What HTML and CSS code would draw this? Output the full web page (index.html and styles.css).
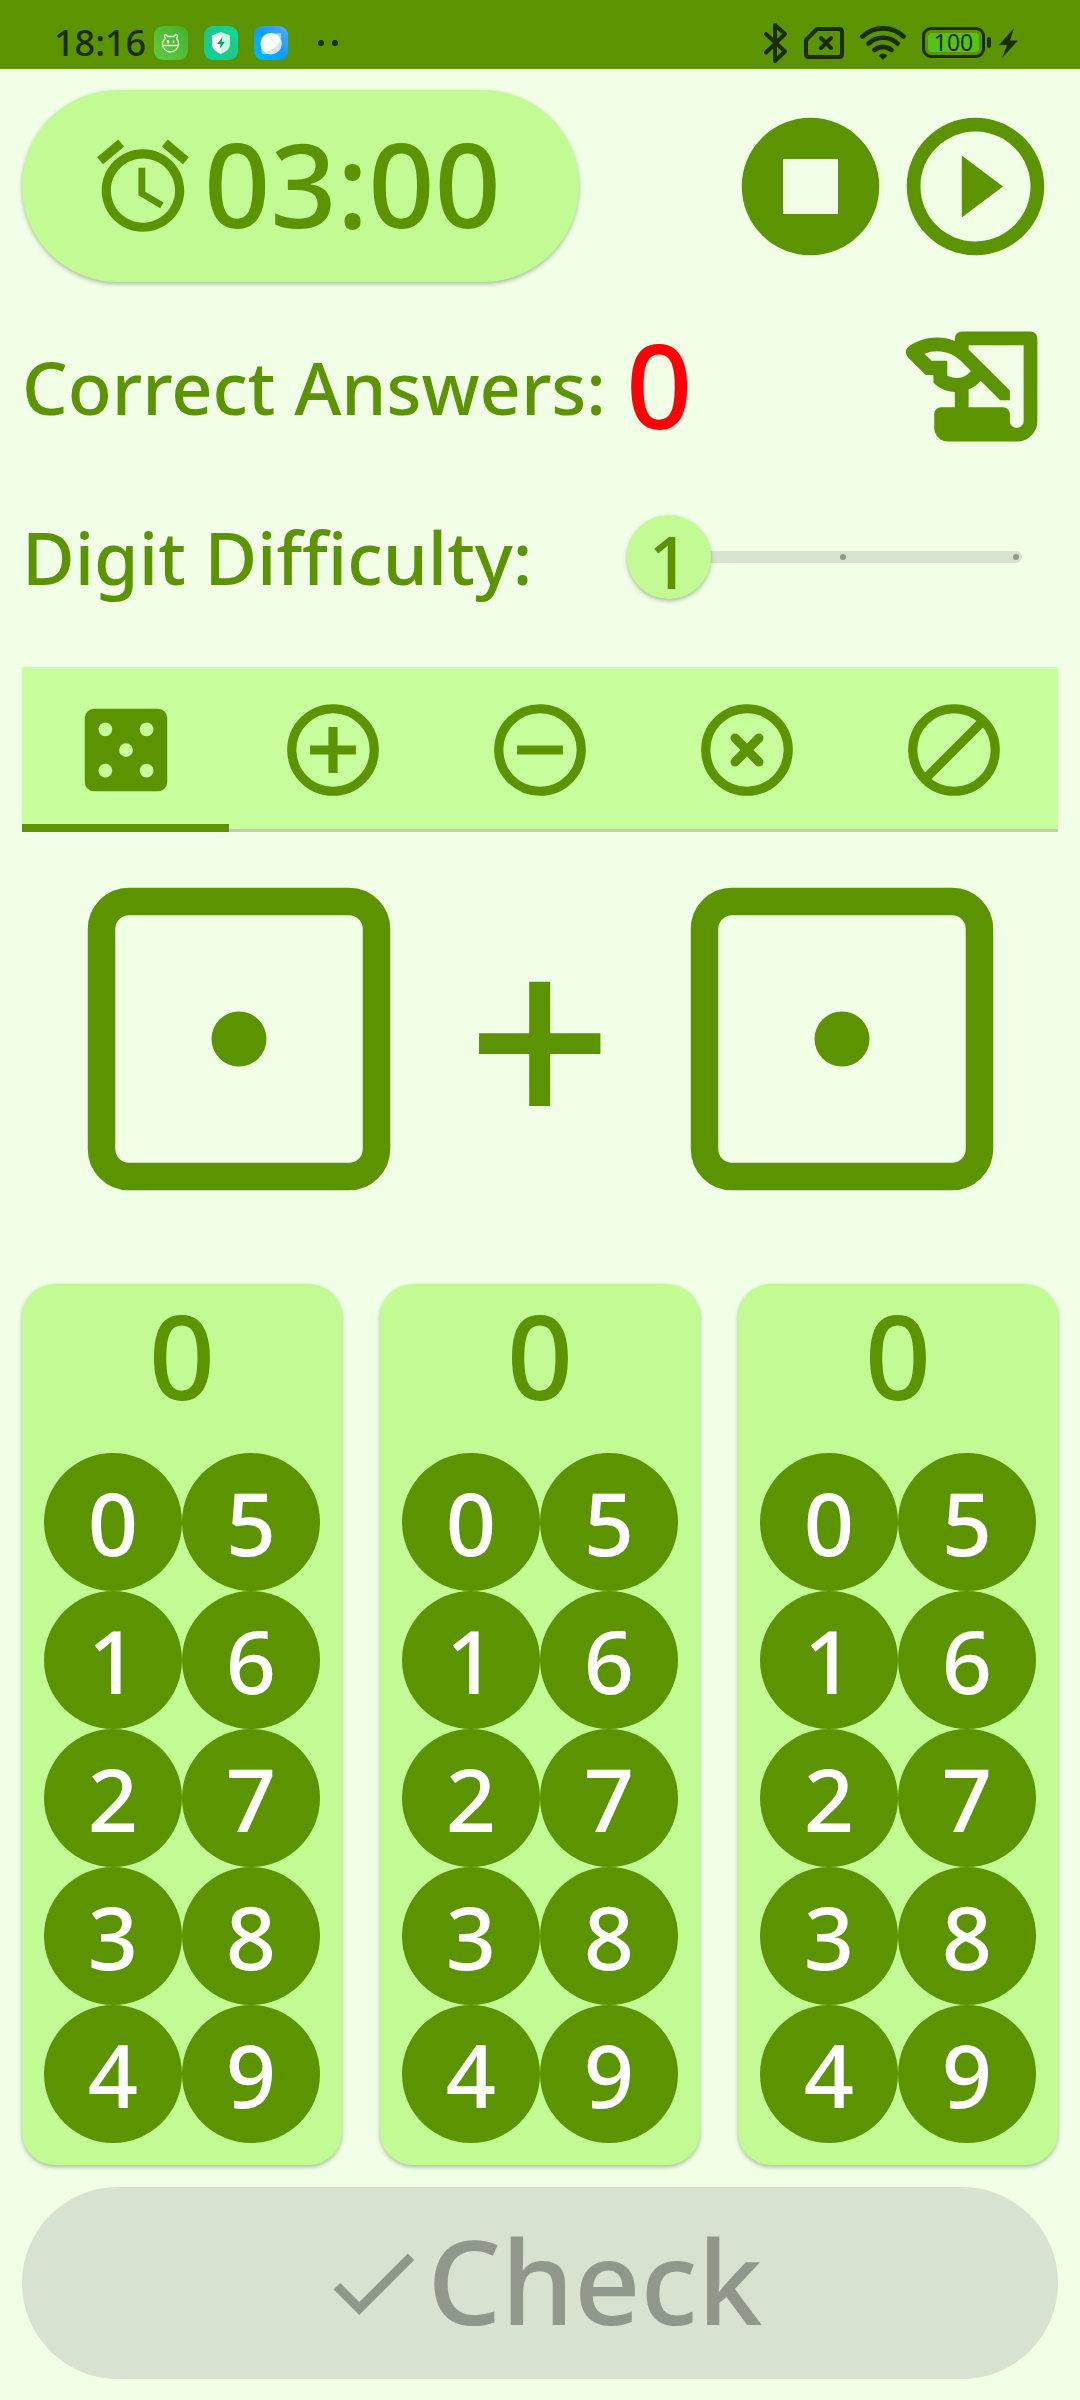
FILE: index.html
```html
<!DOCTYPE html>
<html lang="en">
<head>
<meta charset="utf-8">
<meta name="viewport" content="width=device-width, initial-scale=1">
<title>Math practice</title>
<link rel="stylesheet" href="styles.css">
</head>
<body>
<header class="status">
  <div class="status-left">
    <time class="clock">18:16</time>
    <span class="apps">
      <svg class="app" viewBox="0 0 34 34" aria-hidden="true">
        <defs>
          <linearGradient id="g1" x1="0" y1="1" x2="1" y2="0"><stop offset="0" stop-color="#63cb45"/><stop offset="1" stop-color="#43b02c"/></linearGradient>
          <linearGradient id="g2" x1="0" y1="1" x2="1" y2="0"><stop offset="0" stop-color="#0bd3a0"/><stop offset="0.5" stop-color="#1cc98a"/><stop offset="1" stop-color="#12d79d"/></linearGradient>
          <linearGradient id="g3" x1="0" y1="1" x2="1" y2="0"><stop offset="0" stop-color="#00bcff"/><stop offset="0.5" stop-color="#06a0ff"/><stop offset="1" stop-color="#5cabff"/></linearGradient>
        </defs>
        <rect width="34" height="34" rx="9" fill="url(#g1)"/>
        <path d="M11 13 10.500 9q2-1 3 1.500h6.500q1.500-2.500 3.500-1.500L23 13q1.500 2 1.500 5a8 8 0 0 1-16 0q0-3 2.500-5zM8.500 19.500h16" fill="none" stroke="#e9fbe0" stroke-width="1.300" stroke-linejoin="round"/>
        <path d="M14 14v3.500M12.600 15.700h2.800M19.500 14.500v2.500" stroke="#e9fbe0" stroke-width="1.500" fill="none"/>
      </svg>
      <svg class="app" viewBox="0 0 34 34" aria-hidden="true">
        <rect width="34" height="34" rx="9" fill="url(#g2)"/>
        <path d="M17 6 8 9.500V19q0 5 9 9z" fill="#fff"/>
        <path d="M17 6l9 3.500V19q0 5-9 9z" fill="#c3fbe4"/>
        <path d="M18.500 11l-5.500 7h3.500l-.800 5 5-7h-3z" fill="#159c6c"/>
      </svg>
      <svg class="app" viewBox="0 0 34 34" aria-hidden="true">
        <rect width="34" height="34" rx="9" fill="url(#g3)"/>
        <path d="M18 8l9-1v6zM7 21l1 7h7z" fill="#9bd5ff"/>
        <circle cx="17" cy="17.500" r="10.500" fill="#fff"/>
        <path d="M27.500 17a10.500 10.500 0 0 1-17 9Q21 24 27.500 14z" fill="#cfe7fc"/>
      </svg>
    </span>
    <svg class="more" viewBox="0 0 20 8" aria-hidden="true"><circle cx="3" cy="4" r="3"/><circle cx="17" cy="4" r="3"/></svg>
  </div>
  <div class="status-right">
    <svg width="24" height="40" viewBox="0 0 24 40" aria-label="Bluetooth"><path d="M2 11l19 17.500-10 9.500V2l10 9L2 29.500" fill="none" stroke="currentColor" stroke-width="4" stroke-linejoin="round" stroke-linecap="round"/></svg>
    <svg width="40" height="32" viewBox="0 0 40 32" aria-label="No SIM"><path d="M13 2h22q3 0 3 3v22q0 3-3 3H5q-3 0-3-3V13z" fill="none" stroke="currentColor" stroke-width="4" stroke-linejoin="round"/><path d="M17 11l10 10M27 11L17 21" stroke="currentColor" stroke-width="4" stroke-linecap="round"/></svg>
    <svg width="46" height="34" viewBox="0 0 46 34" aria-label="Wi-Fi"><path d="M2.500 10.500a30 30 0 0 1 41 0M8.500 17.500a21 21 0 0 1 29 0M14.500 24a13 13 0 0 1 17 0" fill="none" stroke="currentColor" stroke-width="4.600" stroke-linecap="round"/><path d="M18.500 29.500q4.500-4 9 0L23 34z" fill="currentColor"/></svg>
    <span class="battery-group">
      <span class="battery"><span class="charge">100</span></span>
      <span class="nub"></span>
      <svg width="20" height="30" viewBox="0 0 20 30" aria-label="Charging"><path d="M15 0L0 17h8L3 30 19 12.500h-8z" fill="currentColor"/></svg>
    </span>
  </div>
</header>

<main class="app-main">
  <section class="row timer-row">
    <div class="timer pill">
      <svg class="icon" viewBox="0 0 24 24" aria-hidden="true"><path d="M22 5.720l-4.600-3.860-1.290 1.530 4.600 3.860L22 5.720zM7.880 3.390L6.600 1.860 2 5.710l1.290 1.530 4.590-3.850zM12.500 8H11v6l4.750 2.850.75-1.230-4-2.370V8zM12 4c-4.970 0-9 4.030-9 9s4.020 9 9 9c4.970 0 9-4.030 9-9s-4.030-9-9-9zm0 16c-3.870 0-7-3.130-7-7s3.130-7 7-7 7 3.130 7 7-3.130 7-7 7z"/></svg>
      <span class="big">03:00</span>
    </div>
    <div class="controls">
      <button class="icon-btn" type="button" aria-label="Stop"><svg viewBox="0 0 24 24"><path d="M12 2a10 10 0 1 0 0 20 10 10 0 0 0 0-20zm4 14H8V8h8z"/></svg></button>
      <button class="icon-btn" type="button" aria-label="Start"><svg viewBox="0 0 24 24"><path d="M10 16.500l6-4.500-6-4.500v9zM12 2C6.480 2 2 6.480 2 12s4.480 10 10 10 10-4.480 10-10S17.520 2 12 2zm0 18c-4.410 0-8-3.590-8-8s3.590-8 8-8 8 3.590 8 8-3.590 8-8 8z"/></svg></button>
    </div>
  </section>

  <section class="row">
    <p class="score"><span class="label">Correct Answers:</span><span class="big score-value">0</span></p>
    <button class="icon-btn" type="button" aria-label="History"><svg viewBox="0 0 24 24"><path d="M10 4c-.55 0-1 .45-1 1v.380c-.83-.33-1.720-.5-2.610-.5-1.430 0-2.860.43-4.090 1.300-.53.37-.56 1.130-.1 1.590l2.570 2.570h1.110v1.110c.86.86 1.980 1.310 3.110 1.360V15H7c-.55 0-1 .45-1 1v2c0 1.100.9 2 2 2h10c1.660 0 3-1.340 3-3V5c0-.55-.45-1-1-1H10zM7.890 10.410V8.260H5.610L4.570 7.220a5.070 5.070 0 0 1 1.820-.34c1.340 0 2.590.52 3.540 1.460l1.410 1.410-.2.2a2.700 2.700 0 0 1-1.920.8c-.47 0-.93-.12-1.330-.34zM19 17c0 .55-.45 1-1 1s-1-.45-1-1v-1c0-.55-.45-1-1-1h-5v-2.590c.57-.23 1.100-.57 1.560-1.030l.2-.2L15.590 14H17v-1.410l-6-5.970V6h8v11z"/></svg></button>
  </section>

  <section class="row difficulty">
    <label class="label" for="difficulty">Digit Difficulty:</label>
    <div class="slider">
      <div class="track"><i class="tick"></i><i class="tick"></i><i class="tick"></i></div>
      <input id="difficulty" type="range" min="1" max="3" value="1">
      <output class="thumb-label" for="difficulty">1</output>
    </div>
  </section>

  <nav class="tabs" aria-label="Operation">
    <button class="tab active" type="button" aria-label="Random"><svg class="icon" viewBox="0 0 24 24"><path fill-rule="evenodd" d="M5 3h14a2 2 0 0 1 2 2v14a2 2 0 0 1-2 2H5a2 2 0 0 1-2-2V5a2 2 0 0 1 2-2zM6 7.500a1.500 1.500 0 1 0 3 0 1.500 1.500 0 0 0-3 0zM15 7.500a1.500 1.500 0 1 0 3 0 1.500 1.500 0 0 0-3 0zM10.500 12a1.500 1.500 0 1 0 3 0 1.500 1.500 0 0 0-3 0zM6 16.500a1.500 1.500 0 1 0 3 0 1.500 1.500 0 0 0-3 0zM15 16.500a1.500 1.500 0 1 0 3 0 1.500 1.500 0 0 0-3 0z"/></svg></button>
    <button class="tab" type="button" aria-label="Addition"><svg class="icon line" viewBox="0 0 24 24"><circle cx="12" cy="12" r="9"/><path d="M12 7v10M7 12h10"/></svg></button>
    <button class="tab" type="button" aria-label="Subtraction"><svg class="icon line" viewBox="0 0 24 24"><circle cx="12" cy="12" r="9"/><path d="M7 12h10"/></svg></button>
    <button class="tab" type="button" aria-label="Multiplication"><svg class="icon line" viewBox="0 0 24 24"><circle cx="12" cy="12" r="9"/><path stroke-linecap="round" d="M9.400 9.400l5.200 5.200M14.600 9.400l-5.200 5.200"/></svg></button>
    <button class="tab" type="button" aria-label="Division"><svg class="icon line" viewBox="0 0 24 24"><circle cx="12" cy="12" r="9"/><path d="M18 6L6 18"/></svg></button>
  </nav>

  <section class="problem" aria-label="Problem">
    <svg class="die" viewBox="0 0 24 24" role="img" aria-label="1"><rect x="2" y="2" width="20" height="20" rx="2" class="die-frame"/><circle cx="12" cy="12" r="2"/></svg>
    <span class="operator">+</span>
    <svg class="die" viewBox="0 0 24 24" role="img" aria-label="1"><rect x="2" y="2" width="20" height="20" rx="2" class="die-frame"/><circle cx="12" cy="12" r="2"/></svg>
  </section>

  <section class="pads" aria-label="Answer">
    <div class="pad">
      <output class="big pad-value">0</output>
      <div class="keys">
        <button type="button">0</button><button type="button">1</button><button type="button">2</button><button type="button">3</button><button type="button">4</button>
        <button type="button">5</button><button type="button">6</button><button type="button">7</button><button type="button">8</button><button type="button">9</button>
      </div>
    </div>
    <div class="pad">
      <output class="big pad-value">0</output>
      <div class="keys">
        <button type="button">0</button><button type="button">1</button><button type="button">2</button><button type="button">3</button><button type="button">4</button>
        <button type="button">5</button><button type="button">6</button><button type="button">7</button><button type="button">8</button><button type="button">9</button>
      </div>
    </div>
    <div class="pad">
      <output class="big pad-value">0</output>
      <div class="keys">
        <button type="button">0</button><button type="button">1</button><button type="button">2</button><button type="button">3</button><button type="button">4</button>
        <button type="button">5</button><button type="button">6</button><button type="button">7</button><button type="button">8</button><button type="button">9</button>
      </div>
    </div>
  </section>

  <button class="check pill" type="button" disabled>
    <svg class="icon" viewBox="0 0 24 24" aria-hidden="true"><path d="M9 16.170L4.830 12l-1.420 1.410L9 19 21 7l-1.410-1.410z"/></svg>
    <span class="big">Check</span>
  </button>
</main>
</body>
</html>
```
FILE: styles.css
```css
:root {
  --page: #f0ffe6;
  --green: #5c9300;
  --card: #c2fb94;
  --tabs: #c7ff9c;
  --disabled: #d7e2d0;
  --disabled-ink: #90988c;
  --status-ink: #1a2c00;
  --shadow: 0 2px 4px rgba(40, 60, 20, 0.35);
}

* {
  box-sizing: border-box;
}

body {
  margin: 0;
  background: var(--page);
  color: var(--green);
  font-family: "Noto Sans", sans-serif;
  font-weight: 500;
}

button {
  margin: 0;
  padding: 0;
  border: 0;
  background: none;
  color: inherit;
  font: inherit;
}

svg {
  display: block;
  flex: none;
  fill: currentColor;
}

/* Status bar */
.status {
  display: flex;
  align-items: center;
  justify-content: space-between;
  height: 69px;
  padding: 16px 61px 0 54px;
  background: var(--green);
  color: var(--status-ink);
}

.status-left,
.status-right,
.apps,
.battery-group {
  display: flex;
  align-items: center;
}

.status-left {
  gap: 8px;
}

.status-right {
  gap: 16px;
}

.clock {
  font-size: 36px;
  line-height: 40px;
}

.apps {
  gap: 16px;
}

.app {
  width: 34px;
  height: 34px;
}

.more {
  width: 20px;
  height: 8px;
  margin-left: 22px;
}

.battery-group {
  gap: 2px;
}

.battery {
  width: 63px;
  height: 31px;
  padding: 3px;
  border: 3px solid currentColor;
  border-radius: 9px;
}

.charge {
  display: block;
  border-radius: 4px;
  background: #55c314;
  font-size: 23px;
  font-weight: 400;
  line-height: 19px;
  text-align: center;
}

.nub {
  width: 4px;
  height: 11px;
  margin-right: 6px;
  border-radius: 2px;
  background: currentColor;
}

/* Shared pieces */
.app-main {
  display: flex;
  flex-direction: column;
  padding: 21px 22px;
}

.row {
  display: flex;
  align-items: center;
  justify-content: space-between;
}

.pill {
  display: flex;
  align-items: center;
  min-height: 192px;
  border-radius: 96px;
}

.icon {
  width: 110px;
  height: 110px;
}

.line {
  fill: none;
  stroke: currentColor;
  stroke-width: 2;
}

.big {
  padding-bottom: 6px;
  font-size: 116px;
  line-height: 142px;
}

.label {
  font-size: 72px;
  line-height: 96px;
}

.icon-btn,
.icon-btn svg {
  width: 165px;
  height: 165px;
}

/* Timer */
.timer-row {
  margin-bottom: 22px;
}

.timer {
  padding: 0 72px 0 66px;
  background: var(--card);
  box-shadow: var(--shadow);
}

.timer .big {
  min-width: 309px;
  text-align: center;
}

.controls {
  display: flex;
}

/* Score */
.score {
  display: flex;
  align-items: center;
  gap: 20px;
  margin: 0;
}

.score-value {
  color: #ff0008;
}

/* Difficulty slider */
.difficulty {
  height: 132px;
  margin: 22px 0 44px;
}

.slider {
  position: relative;
  width: 431px;
  height: 84px;
}

.track {
  position: absolute;
  inset: 36px;
  display: flex;
  align-items: center;
  justify-content: space-between;
  padding: 0 3px;
  border-radius: 6px;
  background: var(--disabled);
}

.tick {
  width: 6px;
  height: 6px;
  border-radius: 50%;
  background: var(--disabled-ink);
}

.slider input {
  position: absolute;
  inset: 0;
  width: 100%;
  height: 84px;
  margin: 0;
  background: none;
  appearance: none;
}

.slider input::-webkit-slider-thumb {
  width: 84px;
  height: 84px;
  border: 0;
  border-radius: 50%;
  background: var(--card);
  box-shadow: var(--shadow);
  appearance: none;
}

.thumb-label {
  position: absolute;
  top: 0;
  left: 0;
  width: 84px;
  font-size: 72px;
  line-height: 92px;
  text-align: center;
  pointer-events: none;
}

/* Operation tabs */
.tabs {
  display: grid;
  grid-template-columns: repeat(5, 1fr);
  background: var(--tabs);
}

.tab {
  display: flex;
  align-items: center;
  justify-content: center;
  height: 165px;
  box-shadow: inset 0 -3px #c2cbbc;
}

.tab.active {
  box-shadow: inset 0 -8px var(--green);
}

/* Problem */
.problem {
  display: flex;
  align-items: center;
  justify-content: space-evenly;
  margin: 42px 0 80px;
}

.die {
  width: 330px;
  height: 330px;
}

.die-frame {
  fill: none;
  stroke: currentColor;
  stroke-width: 2;
}

.operator {
  min-width: 170px;
  padding-bottom: 6px;
  font-size: 256px;
  line-height: 300px;
  text-align: center;
}

/* Digit pads */
.pads {
  display: grid;
  grid-template-columns: repeat(3, 1fr);
  gap: 38px;
}

.pad {
  padding: 0 22px 22px;
  border-radius: 33px;
  background: var(--card);
  box-shadow: var(--shadow);
}

.pad-value {
  display: block;
  margin-bottom: 21px;
  text-align: center;
}

.keys {
  display: grid;
  grid-template-rows: repeat(5, 1fr);
  grid-auto-flow: column;
  grid-auto-columns: 1fr;
}

.keys button {
  aspect-ratio: 1;
  border-radius: 50%;
  background: var(--green);
  color: #fff;
  font-size: 88px;
  line-height: 120px;
}

/* Submit */
.check {
  justify-content: center;
  margin-top: 22px;
  background: var(--disabled);
  color: var(--disabled-ink);
}
```
